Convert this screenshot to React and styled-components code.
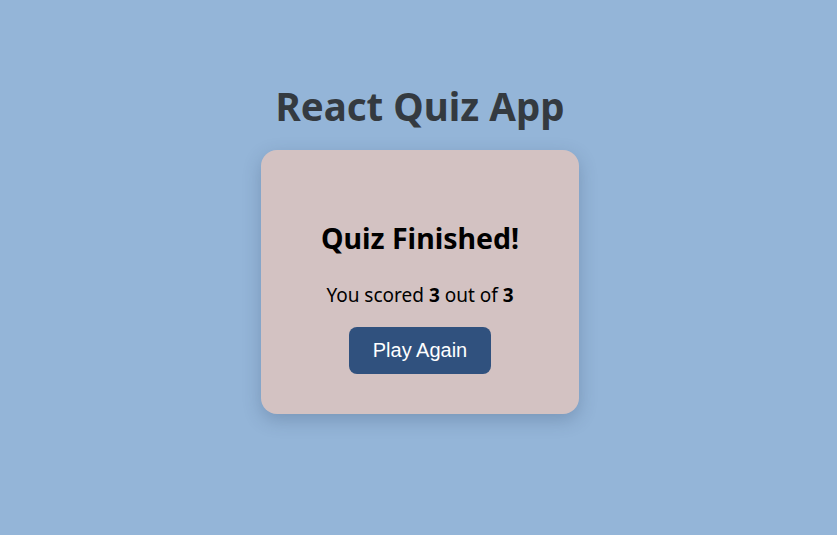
import React from "react";
import styled, { createGlobalStyle } from "styled-components";

const GlobalStyle = createGlobalStyle`
  html, body {
    margin: 0;
    padding: 0;
    background: #94b5d8;
    font-family: "Noto Sans", "Open Sans", sans-serif;
  }
`;

const Page = styled.div`
  min-height: 535px;
  display: flex;
  flex-direction: column;
  align-items: center;
  padding: 78px 0 0 3px;
  box-sizing: border-box;
`;

const Title = styled.h1`
  margin: 0 0 16px;
  font-size: 38.5px;
  font-weight: 700;
  line-height: 56px;
  color: #343a40;
`;

const Card = styled.div`
  width: 318px;
  height: 264px;
  box-sizing: border-box;
  background: #d3c2c2;
  border-radius: 16px;
  box-shadow: 0 6px 18px rgba(40, 60, 90, 0.25);
  display: flex;
  flex-direction: column;
  align-items: center;
  padding-top: 68px;
`;

const Heading = styled.h2`
  margin: 0;
  font-size: 28.5px;
  line-height: 40px;
  font-weight: 700;
  color: #000;
`;

const Score = styled.p`
  margin: 23px 0 0;
  font-size: 19px;
  line-height: 28px;
  color: #000;

  b {
    font-weight: 700;
  }
`;

const Button = styled.button`
  margin-top: 18px;
  padding: 12px 24px;
  border: none;
  border-radius: 8px;
  background: #30517e;
  color: #fff;
  font-family: "Liberation Sans", Arial, sans-serif;
  font-size: 20px;
  line-height: 23px;
  cursor: pointer;
`;

export default function App() {
  return (
    <>
      <GlobalStyle />
      <Page>
        <Title>React Quiz App</Title>
        <Card>
          <Heading>Quiz Finished!</Heading>
          <Score>
            You scored <b>3</b> out of <b>3</b>
          </Score>
          <Button>Play Again</Button>
        </Card>
      </Page>
    </>
  );
}
